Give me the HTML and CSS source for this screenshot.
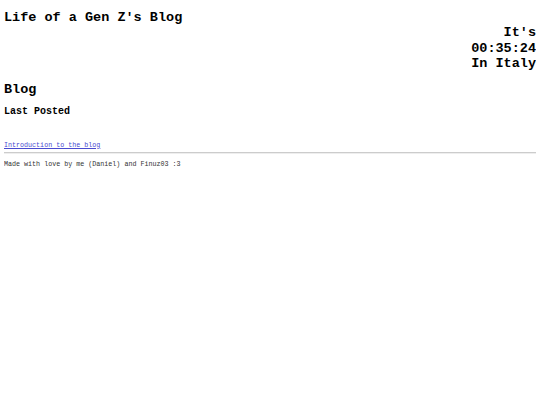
FILE: index.html
```html
<!DOCTYPE html>
<html lang="en">
<head>
<meta charset="utf-8">
<title>Life of a Gen Z's Blog</title>
<link rel="stylesheet" href="styles.css">
</head>
<body>
<header class="site-header">
  <h1 class="site-title">Life of a Gen Z's Blog</h1>
  <div class="clock">
    <div>It's</div>
    <div>00:35:24</div>
    <div>In Italy</div>
  </div>
</header>
<main class="content">
  <h2 class="section-title">Blog</h2>
  <h3 class="sub-title">Last Posted</h3>
  <ul class="posts">
    <li><a href="#">Introduction to the blog</a></li>
  </ul>
</main>
<hr class="divider">
<footer class="footer">Made with love by me (Daniel) and Finuz03 :3</footer>
</body>
</html>
```
FILE: styles.css
```css
html, body {
  background: #fff;
}
body {
  margin: 4px;
  font-family: "Courier New", "Liberation Mono", monospace;
  color: #000;
}
.site-title {
  font-size: 13.5px;
  font-weight: bold;
  line-height: 14px;
  margin: 7px 0 0 0;
}
.clock {
  text-align: right;
  font-size: 13.5px;
  font-weight: bold;
  line-height: 15.5px;
  margin-top: 0;
}
.section-title {
  font-size: 13.5px;
  font-weight: bold;
  line-height: 16px;
  margin: 10px 0 0 0;
}
.sub-title {
  font-size: 10px;
  font-weight: bold;
  line-height: 12px;
  margin: 8px 0 0 0;
}
.posts {
  list-style: none;
  margin: 23px 0 0 0;
  padding: 0;
  font-size: 6.7px;
  line-height: 8px;
}
.posts a {
  color: #4a4ad0;
}
.divider {
  border: none;
  border-top: 1px solid #ccc;
  border-bottom: 1px solid #eee;
  margin: 3px 0 0 0;
  height: 0;
}
.footer {
  font-size: 6.7px;
  line-height: 8px;
  margin-top: 6px;
  color: #333;
}
```
